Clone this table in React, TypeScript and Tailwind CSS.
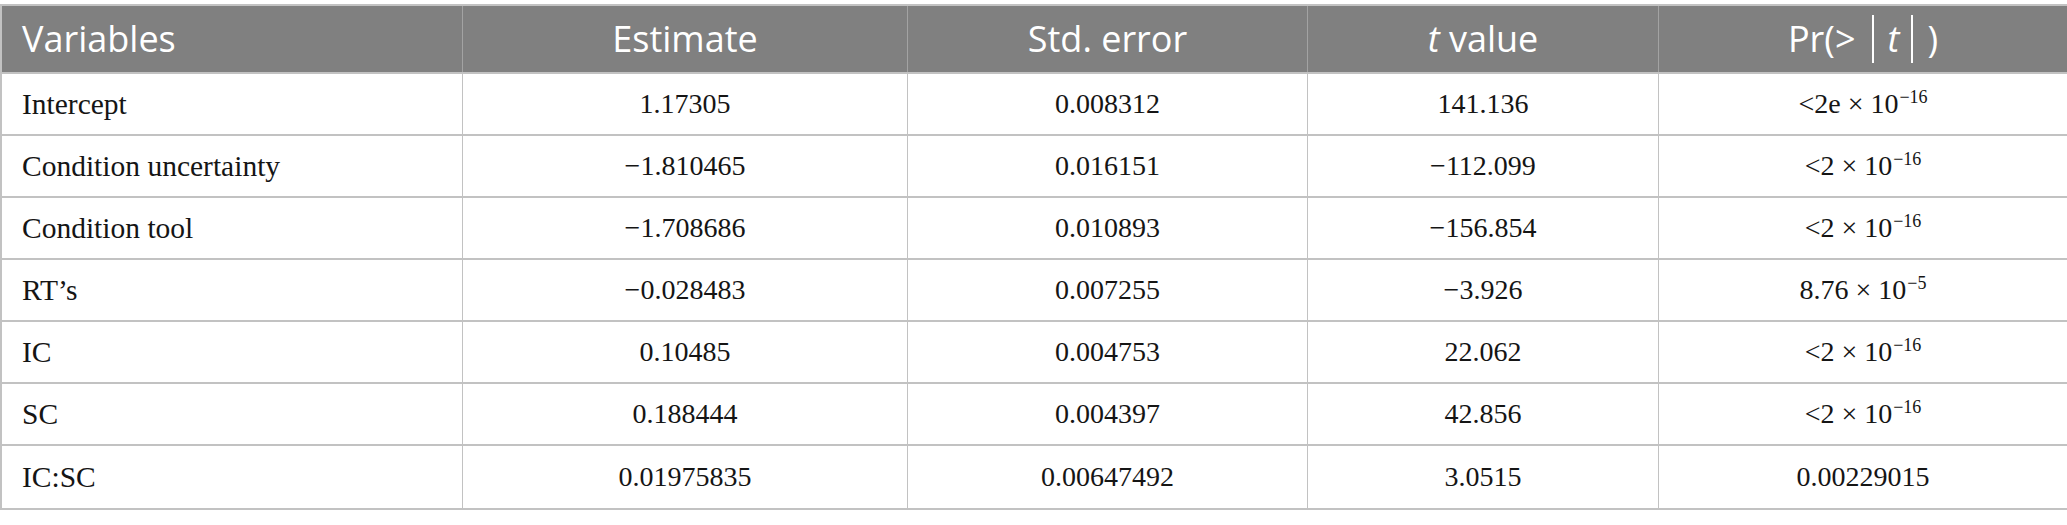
import React from "react";

const cols = "grid grid-cols-[461px_445px_400px_351px_410px]";

type Row = { v: string; est: string; se: string; t: string; p: React.ReactNode };

const Exp = ({ pre, base }: { pre: string; base?: string }) => (
  <span>
    {pre} × 10<span className="text-[18px] relative top-[-10px] ml-[1px]">{base ?? "−16"}</span>
  </span>
);

const rows: Row[] = [
  { v: "Intercept", est: "1.17305", se: "0.008312", t: "141.136", p: <Exp pre="<2e" /> },
  { v: "Condition uncertainty", est: "−1.810465", se: "0.016151", t: "−112.099", p: <Exp pre="<2" /> },
  { v: "Condition tool", est: "−1.708686", se: "0.010893", t: "−156.854", p: <Exp pre="<2" /> },
  { v: "RT’s", est: "−0.028483", se: "0.007255", t: "−3.926", p: <Exp pre="8.76" base="−5" /> },
  { v: "IC", est: "0.10485", se: "0.004753", t: "22.062", p: <Exp pre="<2" /> },
  { v: "SC", est: "0.188444", se: "0.004397", t: "42.856", p: <Exp pre="<2" /> },
  { v: "IC:SC", est: "0.01975835", se: "0.00647492", t: "3.0515", p: "0.00229015" },
];

export default function App() {
  const head = "flex items-center justify-center border-r border-[#a3a3a3] h-full";
  const cell = "flex items-center justify-center border-r border-[#c2c2c2] h-full";
  return (
    <div className="w-[2067px] h-[525px] bg-white pt-[4px]">
      <div className="border-l-2 border-t-2 border-[#c2c2c2] border-b-2 w-[2067px]">
        <div
          className={`${cols} h-[68px] bg-[#808080] text-white text-[36px] border-b-2 border-[#c2c2c2]`}
          style={{ fontFamily: '"Open Sans", "Noto Sans", sans-serif' }}
        >
          <div className="flex items-center pl-[20px] border-r border-[#a3a3a3] h-full">Variables</div>
          <div className={head}>Estimate</div>
          <div className={head}>Std. error</div>
          <div className={head}>
            <span><i>t</i> value</span>
          </div>
          <div className="flex items-center justify-center h-full border-r-2 border-[#c2c2c2]">
            <span className="flex items-center">
              Pr(&gt;
              <span className="inline-block w-[2px] h-[48px] bg-white ml-[16px] mr-[14px]" />
              <i>t</i>
              <span className="inline-block w-[2px] h-[48px] bg-white ml-[12px] mr-[14px]" />)
            </span>
          </div>
        </div>
        {rows.map((r, i) => (
          <div
            key={r.v}
            className={`${cols} h-[62px] text-[28px] text-[#151515] ${i < rows.length - 1 ? "border-b-2 border-[#c2c2c2]" : ""}`}
            style={{ fontFamily: '"Liberation Serif", "Times New Roman", serif' }}
          >
            <div className="flex items-center pl-[20px] border-r border-[#c2c2c2] h-full text-[29.5px]">{r.v}</div>
            <div className={cell}>{r.est}</div>
            <div className={cell}>{r.se}</div>
            <div className={cell}>{r.t}</div>
            <div className="flex items-center justify-center h-full border-r-2 border-[#c2c2c2]">{r.p}</div>
          </div>
        ))}
      </div>
    </div>
  );
}
